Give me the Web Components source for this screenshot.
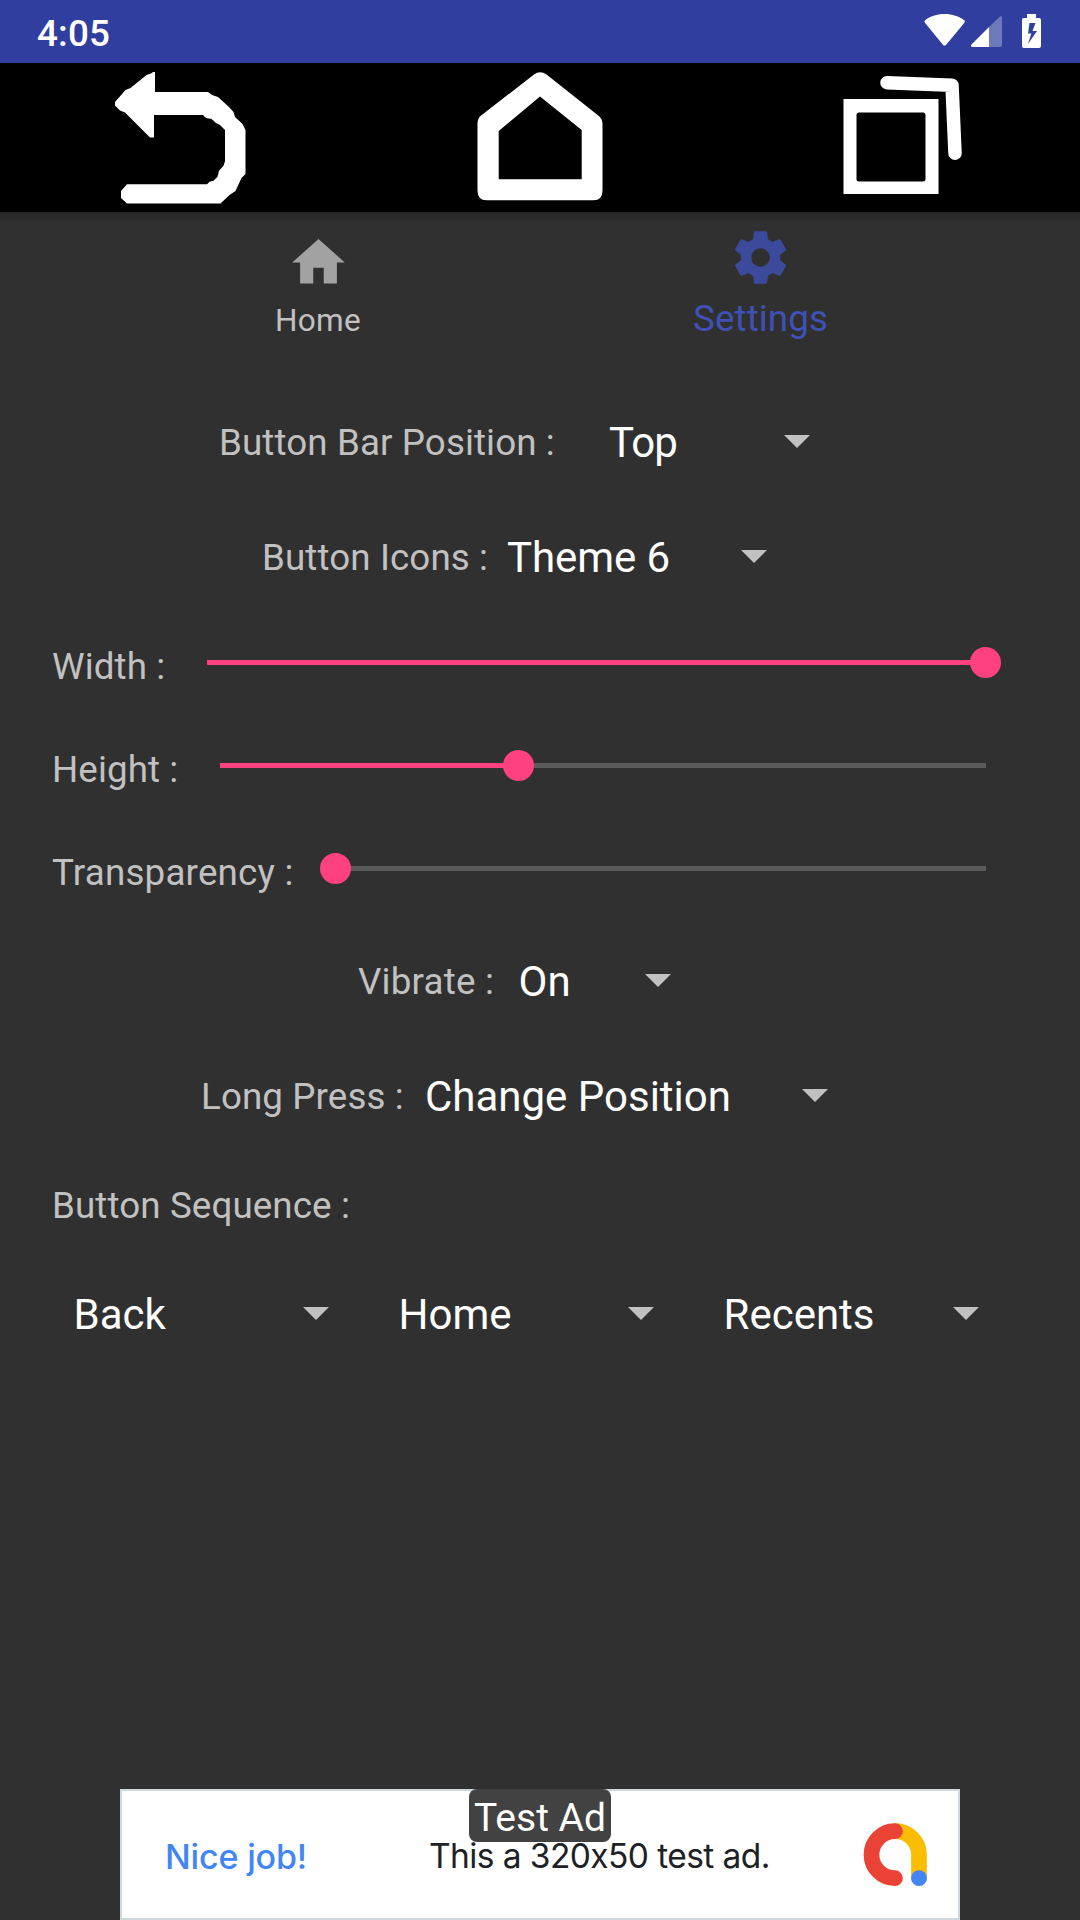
<!DOCTYPE html>
<html lang="en">
<head>
<meta charset="utf-8">
<title>Button Bar Settings</title>
<style>
html,body{margin:0;padding:0;background:#303030}
body{width:1080px;height:1920px;overflow:hidden;font-family:Roboto,"Noto Sans",sans-serif}
</style>
</head>
<body>
<app-screen></app-screen>
<script>
function define(name, html, setup) {
  customElements.define(name, class extends HTMLElement {
    constructor() {
      super();
      const t = document.createElement('template');
      t.innerHTML = html;
      this.attachShadow({mode: 'open'}).appendChild(t.content.cloneNode(true));
    }
    connectedCallback() { if (setup) setup(this); }
  });
}

define('status-bar', `
<style>
:host{display:flex;height:63px;background:#303f9f;color:#fff;align-items:center;justify-content:space-between;padding:0 39px 0 37px;box-sizing:border-box}
.time{font-size:36.75px;font-weight:500;line-height:43px;padding-top:4px;letter-spacing:.2px}
.icons{display:flex;height:63px}
svg{display:block}
</style>
<span class="time"><slot></slot></span>
<div class="icons">
<svg width="46" height="63" viewBox="924 0 46 63"><path fill="#fff" d="M944.5 14.1c8 0 14.400 2.300 19.600 6.100.9.7 1 1.700.3 2.500l-18.200 22c-1 1.200-2.300 1.200-3.300 0l-18-22c-.7-.8-.6-1.800.3-2.500 5.100-3.800 11.300-6.100 19.300-6.100z"/></svg>
<svg width="52" height="63" viewBox="970 0 52 63"><path fill="#fff" fill-opacity=".3" d="M989 27l11-10.500q2-1 2 1V45q0 2-2 2h-11z"/><path fill="#fff" d="M989 27v20h-17q-2-.8-.5-2.500z"/></svg>
<svg width="19" height="63" viewBox="1022 0 19 63"><path fill="#fff" fill-rule="evenodd" d="M1027 14h9v4h3q2 0 2 2v26q0 2-2 2h-15q-2 0-2-2V20q0-2 2-2h3zM1029.500 23l-1.500 10.500h3.300L1028 44l9-13h-4.500l3-8z"/></svg>
</div>`);

define('button-bar', `
<style>
:host{display:flex;height:149px;background:#000}
svg{display:block;flex:1;height:149px}
</style>
<svg viewBox="0 63 360 149"><path fill="#fff" d="M115 102l10.500-12 5-2 16-13 4.500-1.500 2-1.500h2v20h53l4 3 6 2 11 10 4.500 5 1.500 5 7.500 7 3 6v44l-4 4-6 13-6 4-9 8.500H127l-6-5.500v-7l6-6.800h80l2.500-2.500 4-1 4-4 1.500-6 4.500-5 1.500-4.500V130l-5-5-4-2-4.500-4-5.500-1-3-3h-49v22.500h-4L125 112.500l-5-2-5-5z"/></svg>
<svg viewBox="360 63 360 149"><path fill="#fff" fill-rule="evenodd" d="M534 74.500q6-4.500 12.500 0l53 42q3 3 3 7v67q0 9.800-9 9.800h-107q-9 0-9-9.800v-67q0-4.500 3-7.500zM498.700 131v48.300h83V130L540 96.500z"/></svg>
<svg viewBox="720 63 360 149"><path fill="#fff" fill-rule="evenodd" d="M843.500 99h95v95h-95zM859 112.500q-2.500 0-2.500 2.500v64q0 2.500 2.500 2.500h64q2.500 0 2.500-2.500v-64q0-2.500-2.500-2.500z"/><path fill="none" stroke="#fff" stroke-width="13.500" stroke-linecap="round" stroke-linejoin="round" d="M887 82.700l65 2.500 3 68"/></svg>`);

define('nav-tab', `
<style>
:host{display:flex;width:441px;height:147px;flex-direction:column;align-items:center;box-sizing:border-box;padding:19px 3px 0 0;color:#c1c1c1;font-size:31.500px;--icon:#a2a2a2;letter-spacing:.25px}
:host([active]){padding:14px 0 0;color:#3f51b5;font-size:36.75px;--icon:#3c4a9c;letter-spacing:.1px}
svg{display:block;width:63px;height:63px;fill:var(--icon)}
span{line-height:43px;margin-top:5px}
:host([active]) span{margin-top:8px}
</style>
<svg viewBox="0 0 24 24"><path/></svg><span><slot></slot></span>`,
el => el.shadowRoot.querySelector('path').setAttribute('d', el.hasAttribute('active')
 ? 'M19.430 12.980c.04-.32.070-.64.070-.98s-.03-.66-.07-.98l2.110-1.650c.19-.15.24-.42.120-.64l-2-3.460c-.12-.22-.39-.3-.61-.22l-2.490 1c-.52-.4-1.080-.73-1.690-.98l-.38-2.650C14.460 2.180 14.250 2 14 2h-4c-.25 0-.46.18-.49.42l-.38 2.650c-.61.25-1.170.59-1.690.98l-2.490-1c-.23-.09-.49 0-.61.22l-2 3.460c-.13.22-.07.49.120.64l2.110 1.650c-.04.32-.07.65-.07.980s.03.66.070.98l-2.110 1.650c-.19.15-.24.42-.12.640l2 3.460c.12.22.39.3.61.220l2.490-1c.52.4 1.080.73 1.690.98l.38 2.650c.03.24.24.42.49.42h4c.25 0 .46-.18.49-.42l.38-2.650c.61-.25 1.170-.59 1.690-.98l2.490 1c.23.09.49 0 .61-.22l2-3.460c.12-.22.07-.49-.12-.64l-2.110-1.650zM12 15.500c-1.930 0-3.500-1.570-3.500-3.500s1.570-3.500 3.500-3.500 3.500 1.570 3.500 3.500-1.570 3.500-3.500 3.500z'
 : 'M10 20v-6h4v6h5v-8h3L12 3 2 12h3v8z'));

define('nav-tabs', `
<style>:host{display:flex;justify-content:center;height:173px;background:linear-gradient(#272727,#303030 11px)}</style><slot></slot>`);

define('drop-down', `
<style>
:host{display:flex;align-items:center;justify-content:space-between;color:#fff;font-size:42px;line-height:49px;white-space:nowrap;box-sizing:border-box}
svg{display:block;width:26px;height:13px;margin-bottom:2px;fill:#c1c1c1}
</style>
<span><slot></slot></span><svg viewBox="0 0 26 13"><path d="M0 0h26L13 13z"/></svg>`);

define('setting-row', `
<style>
:host{display:flex;height:115px;align-items:center;box-sizing:border-box}
:host([compact]){height:103px}
.label{font-size:36.75px;line-height:43px;color:#c1c1c1;white-space:nowrap;flex:none;letter-spacing:.1px}
</style>
<span class="label"><slot name="label"></slot></span><slot></slot>`,
el => {
  el.style.paddingLeft = el.getAttribute('start') + 'px';
  el.shadowRoot.querySelector('.label').style.width = el.getAttribute('label-width') + 'px';
});

define('seek-bar', `
<style>
:host{display:flex;align-items:center;height:32px;margin-bottom:8px}
.done{height:5px;background:#ff4081}
.rest{height:5px;flex:1;background:#5b5b5b}
.thumb{width:31.500px;height:31.500px;border-radius:50%;background:#ff4081;margin:0 -15.750px;z-index:1;flex:none}
</style>
<div class="done"></div><div class="thumb"></div><div class="rest"></div>`,
el => {
  el.style.width = el.getAttribute('length') + 'px';
  el.shadowRoot.querySelector('.done').style.width = el.getAttribute('value') + 'px';
});

define('sequence-row', `
<style>:host{display:flex;height:115px;align-items:center;padding-left:73.500px;gap:70px}
::slotted(*){width:255px}</style><slot></slot>`);

define('test-ad', `
<style>
:host{display:flex;position:relative;width:840px;height:131px;margin:0 auto;background:#fff;border:solid #cfd8dc;border-width:2.500px;box-sizing:border-box;align-items:center;font-family:Inter,"Open Sans",sans-serif;white-space:nowrap}
.lead,.body{padding-top:3px}
.lead{color:#4285f4;font-weight:500;font-size:34px;margin-left:43px;width:264px;letter-spacing:-.15px}
.body{color:#202124;font-size:33.500px;width:432.500px;letter-spacing:-.58px}
svg{display:block;width:66px;height:66px}
.badge{position:absolute;left:347px;top:-2px;width:142px;height:53px;border-radius:8px;background:#424242;color:#fff;font-family:Roboto,sans-serif;font-size:39px;line-height:59px;text-align:center}
</style>
<span class="lead"><slot name="lead"></slot></span><span class="body"><slot></slot></span>
<svg viewBox="861 1822 66 66" fill="none" stroke-width="15.700" stroke-linecap="round"><path stroke="#fbbc04" d="M894.500 1831.200A23.500 23.500 0 0 1 918 1854.700V1878"/><path stroke="#ea4335" d="M894 1831.200a23.500 23.500 0 0 0 0 47"/><circle cx="918" cy="1878.200" r="7.900" fill="#4285f4"/></svg>
<span class="badge"><slot name="badge"></slot></span>`);

define('app-screen', `
<style>:host{display:flex;flex-direction:column;width:1080px;height:1920px;background:#303030}
main{flex:1}</style>
<status-bar>4:05</status-bar>
<button-bar></button-bar>
<nav-tabs><nav-tab>Home</nav-tab><nav-tab active>Settings</nav-tab></nav-tabs>
<main>
<setting-row start="219" label-width="390"><span slot="label">Button Bar Position :</span><drop-down style="width:201px;letter-spacing:-.9px">Top</drop-down></setting-row>
<setting-row start="262" label-width="245"><span slot="label">Button Icons :</span><drop-down style="width:260px;letter-spacing:-.1px">Theme 6</drop-down></setting-row>
<setting-row compact start="52" label-width="155"><span slot="label">Width :</span><seek-bar length="778.500" value="778.500"></seek-bar></setting-row>
<setting-row compact start="52" label-width="168"><span slot="label">Height :</span><seek-bar length="766" value="298.300"></seek-bar></setting-row>
<setting-row compact start="52" label-width="283.400"><span slot="label" style="letter-spacing:.2px">Transparency :</span><seek-bar length="650.600" value="0"></seek-bar></setting-row>
<setting-row start="358" label-width="160.500"><span slot="label" style="letter-spacing:.2px">Vibrate :</span><drop-down style="width:152.500px">On</drop-down></setting-row>
<setting-row start="201" label-width="224"><span slot="label">Long Press :</span><drop-down style="width:403px">Change Position</drop-down></setting-row>
<setting-row compact start="52" label-width="400"><span slot="label">Button Sequence :</span></setting-row>
<sequence-row><drop-down>Back</drop-down><drop-down>Home</drop-down><drop-down>Recents</drop-down></sequence-row>
</main>
<test-ad><span slot="lead">Nice job!</span>This a 320x50 test ad.<span slot="badge">Test Ad</span></test-ad>`);
</script>
</body>
</html>
